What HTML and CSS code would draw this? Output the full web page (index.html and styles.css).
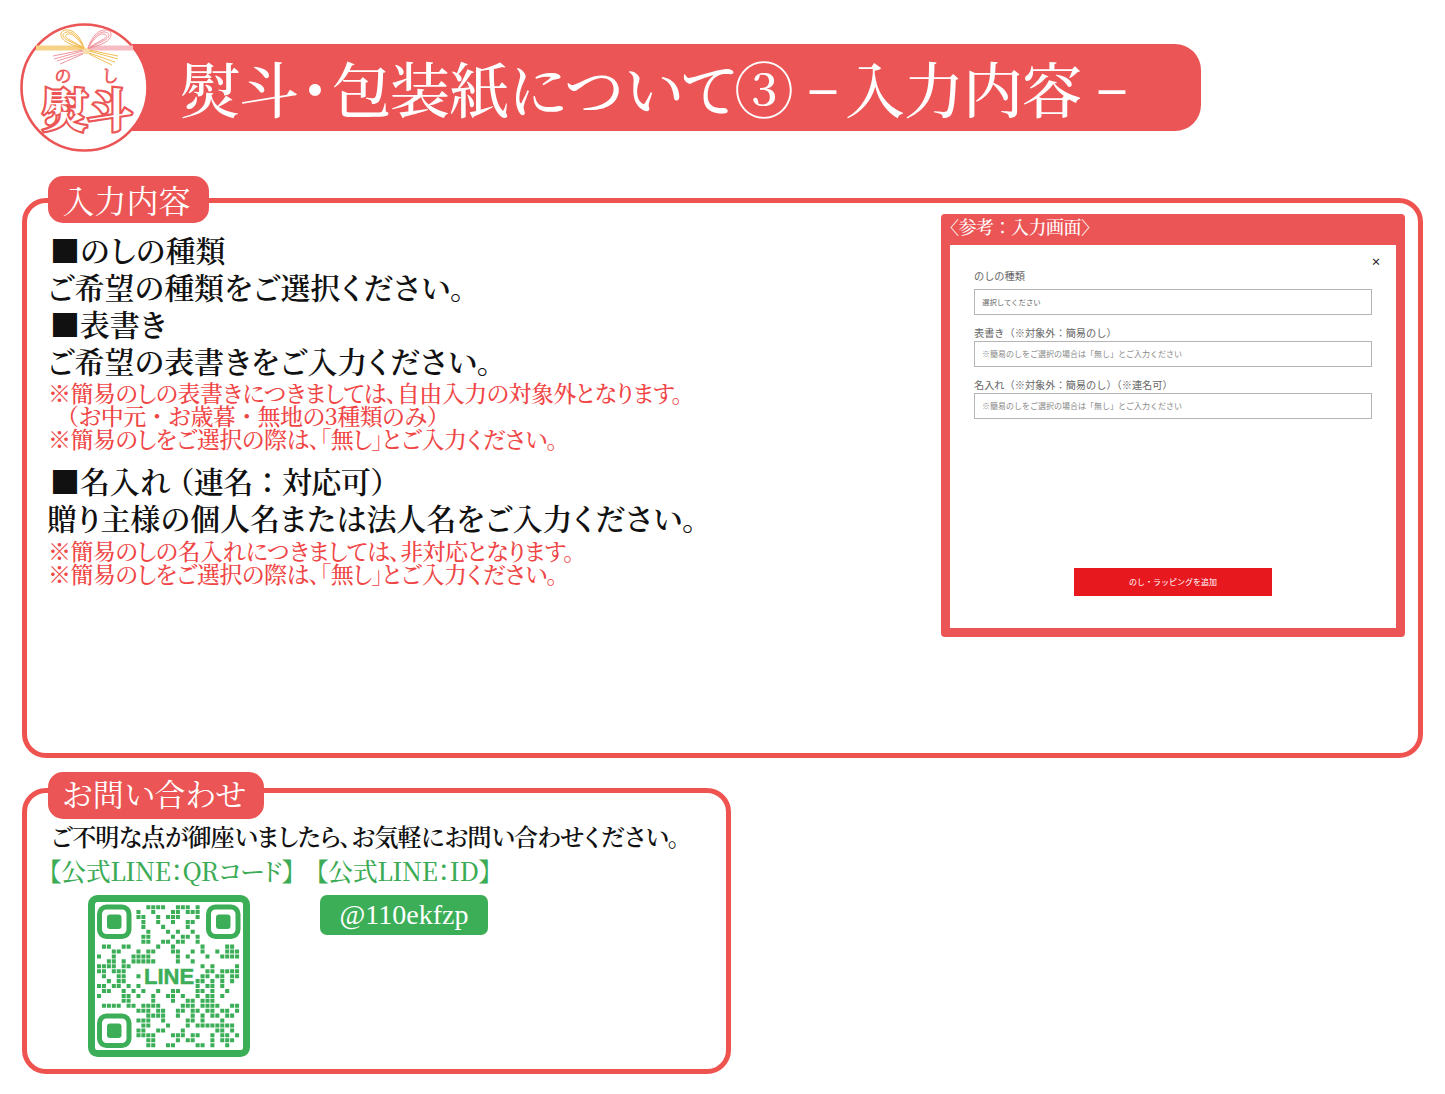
FILE: index.html
```html
<!DOCTYPE html>
<html lang="ja">
<head>
<meta charset="utf-8">
<title>熨斗・包装紙について③</title>
<link rel="stylesheet" href="styles.css">
</head>
<body>
<header class="header">
  <svg class="logo" viewBox="0 0 130 130" aria-label="のし 熨斗">
    <circle class="logo-disc" cx="64.5" cy="64.5" r="63"/>
    <path class="band-y" d="M16 25H62"/>
    <path class="band-p" d="M70 25H113"/>
    <path class="cord-p" d="M63 27L33 33M63 28L34 36M63 30L37 38M63 31L40 41"/>
    <path class="cord-y" d="M69 27L98 33M69 28L98 36M69 30L95 39M69 31L92 42"/>
    <path class="cord-y" d="M64 25C60 12 52 6 46 7C38 8 40 16 48 20C54 23 60 24 64 26M64 25C59 14 52 8 47 9C41 10 42 15 49 18C55 21 60 23 64 26M64 25C58 15 52 10 48 11C44 12 45 15 50 17C55 20 60 22 64 26"/>
    <path class="cord-p" d="M68 25C72 12 80 6 86 7C94 8 92 16 84 20C78 23 72 24 68 26M68 25C73 14 80 8 85 9C91 10 90 15 83 18C77 21 72 23 68 26M68 25C74 15 80 10 84 11C88 12 87 15 82 17C77 20 72 22 68 26"/>
    <path class="cord-y" d="M64 25V31M66 25V31M68 25V31"/>
    <text class="logo-kana" x="43" y="59">の</text>
    <text class="logo-kana" x="90" y="59">し</text>
    <text class="logo-kanji" x="45" y="104">熨</text>
    <text class="logo-kanji" x="90" y="104">斗</text>
  </svg>
  <div class="title-bar">
    <h1 class="title">熨斗<span class="title-dot">・</span>包装紙について③<span class="title-dash title-dash-a">–</span>入力内容<span class="title-dash title-dash-b">–</span></h1>
  </div>
</header>

<section class="box box-main">
  <h2 class="tab tab-main">入力内容</h2>
  <div class="main-row">
    <div class="copy">
      <p class="big head">■のしの種類</p>
      <p class="big">ご希望の種類をご選択ください。</p>
      <p class="big head">■表書き</p>
      <p class="big">ご希望の表書きをご入力ください。</p>
      <div class="notes">
        <p class="note">※簡易のしの表書きにつきましては、自由入力の対象外となります。</p>
        <p class="note note-indent">（お中元・お歳暮・無地の3種類のみ）</p>
        <p class="note">※簡易のしをご選択の際は、「無し」とご入力ください。</p>
      </div>
      <p class="big head group">■名入れ<span class="paren">（連名：対応可）</span></p>
      <p class="big">贈り主様の個人名または法人名をご入力ください。</p>
      <div class="notes notes-last">
        <p class="note">※簡易のしの名入れにつきましては、非対応となります。</p>
        <p class="note">※簡易のしをご選択の際は、「無し」とご入力ください。</p>
      </div>
    </div>
    <aside class="panel">
      <div class="panel-title">〈参考：入力画面〉</div>
      <div class="panel-body">
        <div class="close">×</div>
        <div class="field-label first">のしの種類</div>
        <div class="input input-select">選択してください</div>
        <div class="field-label">表書き（※対象外：簡易のし）</div>
        <div class="input">※簡易のしをご選択の場合は「無し」とご入力ください</div>
        <div class="field-label">名入れ（※対象外：簡易のし）（※連名可）</div>
        <div class="input">※簡易のしをご選択の場合は「無し」とご入力ください</div>
        <div class="add-btn">のし・ラッピングを追加</div>
      </div>
    </aside>
  </div>
</section>

<section class="box box-contact">
  <h2 class="tab tab-contact">お問い合わせ</h2>
  <p class="contact-lead">ご不明な点が御座いましたら、お気軽にお問い合わせください。</p>
  <div class="contact-grid">
    <div>
      <p class="line-label">【公式LINE：QRコード】</p>
      <svg class="qr" viewBox="0 0 162 162" aria-label="LINE QRコード">
        <rect class="qr-frame" x="3.5" y="3.5" width="155" height="155" rx="6"/>
        <g class="finder"><rect class="f-o" x="11.5" y="12" width="29.500" height="29.500" rx="7"/><rect class="f-i" x="19" y="19.500" width="14.500" height="14.500" rx="3"/></g>
        <g class="finder"><rect class="f-o" x="120.500" y="12" width="29.500" height="29.500" rx="7"/><rect class="f-i" x="128" y="19.500" width="14.500" height="14.500" rx="3"/></g>
        <g class="finder"><rect class="f-o" x="11.500" y="121" width="29.500" height="29.500" rx="7"/><rect class="f-i" x="19" y="128.500" width="14.500" height="14.500" rx="3"/></g>
        <path class="qr-dots" transform="translate(9 9.700) scale(4.930)" d="M10 .5h4M16 .5h3M20 .5h1M8 1.500h1M11 1.500h1M15 1.500h2M18 1.500h3M8 2.500h2M12 2.500h1M14 2.500h3M20 2.500h1M9 3.500h1M12 3.500h1M15 3.500h1M18 3.500h2M9 4.500h1M13 4.500h1M18 4.500h1M10 5.500h1M14 5.500h1M16 5.500h1M19 5.500h1M9 6.500h2M15 6.500h1M17 6.500h2M20 6.500h1M9 7.500h2M13 7.500h2M16 7.500h2M20 7.500h1M1 8.500h2M5 8.500h2M12 8.500h1M15 8.500h1M21 8.500h1M26 8.500h2M3 9.500h2M8 9.500h1M10 9.500h2M15 9.500h2M19 9.500h1M21 9.500h1M24 9.500h1M26 9.500h3M0 10.500h1M3 10.500h1M7 10.500h4M16 10.500h1M18 10.500h1M22 10.500h1M25 10.500h4M2 11.500h2M5 11.500h1M7 11.500h5M16 11.500h1M19 11.500h1M0 12.500h4M5 12.500h2M21 12.500h1M23 12.500h1M28 12.500h1M0 13.500h2M3 13.500h3M22 13.500h2M25 13.500h4M1 14.500h1M4 14.500h2M8 14.500h1M21 14.500h2M24 14.500h2M27 14.500h2M2 15.500h1M4 15.500h2M20 15.500h2M23 15.500h1M25 15.500h1M27 15.500h1M0 16.500h2M3 16.500h2M6 16.500h1M8 16.500h1M20 16.500h1M22 16.500h2M25 16.500h1M1 17.500h2M5 17.500h1M7 17.500h1M9 17.500h1M12 17.500h1M15 17.500h2M20 17.500h2M23 17.500h1M26 17.500h1M0 18.500h1M5 18.500h2M8 18.500h1M11 18.500h1M14 18.500h2M17 18.500h1M20 18.500h1M22 18.500h2M25 18.500h1M5 19.500h2M11 19.500h1M15 19.500h1M18 19.500h2M21 19.500h3M1 20.500h4M6 20.500h2M9 20.500h4M17 20.500h3M21 20.500h4M27 20.500h2M8 21.500h3M12 21.500h2M16 21.500h2M19 21.500h2M22 21.500h2M25 21.500h2M28 21.500h1M10 22.500h4M16 22.500h1M19 22.500h1M21 22.500h1M23 22.500h2M26 22.500h2M8 23.500h3M13 23.500h1M18 23.500h2M21 23.500h1M25 23.500h1M9 24.500h2M14 24.500h1M18 24.500h1M20 24.500h8M8 25.500h2M12 25.500h2M17 25.500h1M24 25.500h2M27 25.500h1M8 26.500h4M15 26.500h3M19 26.500h2M23 26.500h1M25 26.500h2M28 26.500h1M10 27.500h2M16 27.500h1M18 27.500h2M23 27.500h1M25 27.500h3M10 28.500h2M14 28.500h2M20 28.500h2M23 28.500h1M26 28.500h1"/>
        <text class="qr-line" x="81" y="89">LINE</text>
      </svg>
    </div>
    <div>
      <p class="line-label">【公式LINE：ID】</p>
      <div class="line-id">@110ekfzp</div>
    </div>
  </div>
</section>
</body>
</html>
```

FILE: styles.css
```css
* { box-sizing: border-box; }
html, body { margin: 0; padding: 0; }
body {
  width: 1445px;
  height: 1094px;
  overflow: hidden;
  background: #fff;
  color: #111;
  font-family: "Noto Serif CJK JP", "Liberation Serif", serif;
  font-feature-settings: "palt";
}
p, h1, h2 { margin: 0; font-weight: 400; }

.header { display: flex; align-items: flex-start; padding: 23px 0 0 20px; }
.logo { width: 130px; height: 130px; position: relative; z-index: 1; flex: none; }
.logo-disc { fill: #fff; stroke: #ec5555; stroke-width: 2.6; }
.band-y, .band-p { fill: none; stroke-width: 5; }
.band-y { stroke: #f6d186; }
.band-p { stroke: #f6bcc2; }
.cord-y, .cord-p { fill: none; stroke-width: .9; }
.cord-y { stroke: #f0b643; }
.cord-p { stroke: #ee8b96; }
.logo-kana { font-size: 17px; text-anchor: middle; fill: #fff; stroke: #ec5555; stroke-width: .9; }
.logo-kanji { font-size: 45px; font-weight: 700; text-anchor: middle; fill: #fff; stroke: #ec5555; stroke-width: 4.5; paint-order: stroke; }
.title-bar {
  width: 1070px;
  height: 87px;
  margin: 21px 0 0 -19px;
  padding-left: 49px;
  background: #ec5555;
  border-radius: 0 26px 26px 0;
}
.title { color: #fff; font-size: 60px; font-weight: 500; line-height: 87px; white-space: nowrap; letter-spacing: -1px; }
.title-dot { margin: 0 2px; }
.title-dash { font-family: "Liberation Serif", serif; font-size: 52px; font-weight: 700; vertical-align: 8px; }
.title-dash-a { margin: 0 10px 0 17px; }
.title-dash-b { margin-left: 18px; }

.box {
  position: relative;
  margin-left: 22px;
  border: 5px solid #ef5350;
  border-radius: 24px;
  background: #fff;
}
.box-main { width: 1401px; height: 560px; margin-top: 45px; }
.box-contact { width: 709px; height: 286px; margin-top: 30px; padding: 28px 0 0 17px; }
.tab {
  position: absolute;
  height: 47px;
  padding-right: 4px;
  background: #ec5555;
  color: #fff;
  text-align: center;
  border-radius: 15px;
  white-space: nowrap;
}
.tab-main { left: 21px; top: -27px; width: 161px; font-size: 32px; line-height: 47px; }
.tab-contact { left: 21px; top: -21px; width: 216px; font-size: 31px; line-height: 41px; }

.main-row { display: flex; justify-content: space-between; align-items: flex-start; padding: 11px 13px 0 20px; }
.copy { padding-top: 17px; }
.big { font-size: 30px; font-weight: 600; line-height: 37px; white-space: nowrap; letter-spacing: -.15px; }
.head { padding-left: 3px; }
.paren { font-feature-settings: normal; letter-spacing: -.6px; margin-left: -6px; }
.group { margin-top: 11px; }
.notes { margin-top: 2px; padding-left: 1px; }
.notes-last { margin-top: 3px; }
.note { color: #f04545; font-size: 23px; font-weight: 500; line-height: 23.200px; white-space: nowrap; letter-spacing: -.55px; }
.note-indent { padding-left: 8px; font-feature-settings: normal; letter-spacing: -.6px; }

.panel { width: 464px; height: 423px; background: #ec5555; border-radius: 4px; padding: 0 9px 9px; display: flex; flex-direction: column; flex: none; }
.panel-title { height: 31px; line-height: 25px; color: #fff; font-size: 18px; font-weight: 500; white-space: nowrap; margin-left: -9px; padding-left: 0; font-feature-settings: normal; letter-spacing: -.5px; }
.panel-body { flex: 1; background: #fff; padding: 0 24px 32px; display: flex; flex-direction: column; font-family: "Noto Sans CJK JP", sans-serif; font-feature-settings: normal; color: #666; }
.close { height: 14px; margin-top: 10px; line-height: 14px; text-align: right; font-size: 10px; font-weight: 700; color: #222; margin-right: -9px; }
.field-label { font-size: 10.200px; line-height: 13px; height: 13px; margin: 11px 0 2px; white-space: nowrap; }
.field-label.first { margin: 0 0 7px; }
.input { width: 398px; height: 26px; line-height: 23px; border: 1.500px solid #b5b5b5; padding-left: 7px; font-size: 8px; color: #888; white-space: nowrap; }
.input-select { color: #666; font-size: 7.400px; }
.add-btn { width: 198px; height: 28px; line-height: 28px; margin: auto 0 0 100px; background: #e8181f; color: #fff; font-size: 8px; text-align: center; }

.contact-lead { font-size: 24px; font-weight: 600; line-height: 30px; white-space: nowrap; padding-left: 7px; letter-spacing: -1px; }
.contact-grid { display: grid; grid-template-columns: 267px 1fr; margin-top: 5px; }
.line-label { color: #3cab55; font-size: 25px; font-weight: 500; line-height: 28px; white-space: nowrap; margin-bottom: 11px; padding-left: 5px; letter-spacing: -.4px; }
.qr { display: block; width: 162px; height: 162px; margin-left: 44px; }
.qr-frame { fill: #fff; stroke: #3dae58; stroke-width: 7; }
.f-o { fill: none; stroke: #3dae58; stroke-width: 5; }
.f-i { fill: #3dae58; }
.qr-dots { fill: none; stroke: #3dae58; stroke-width: .82; stroke-dasharray: .82 .18; }
.qr-line { fill: #3dae58; stroke: #3dae58; stroke-width: .5; font: 700 22px "Liberation Sans", sans-serif; text-anchor: middle; }
.line-id {
  width: 168px;
  height: 40px;
  line-height: 40px;
  margin-left: 9px;
  background: #3dae58;
  border-radius: 7px;
  color: #fff;
  font-family: "Liberation Serif", serif;
  font-size: 28px;
  text-align: center;
}
```
